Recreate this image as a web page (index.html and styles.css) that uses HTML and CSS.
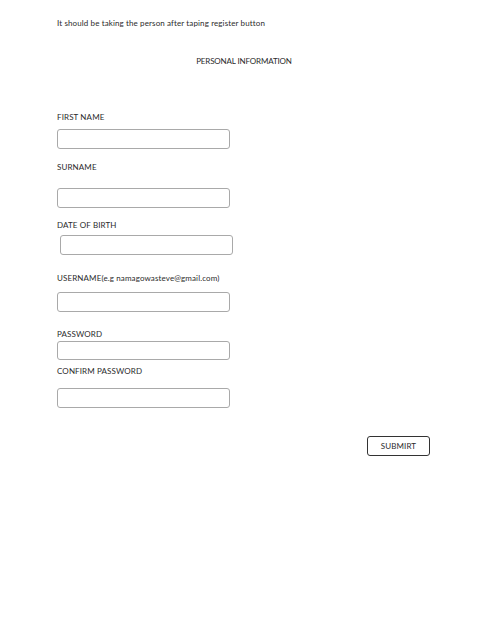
FILE: index.html
```html
<!DOCTYPE html>
<html lang="en">
<head>
    <meta charset="UTF-8">
    <meta name="viewport" content="width=device-width, initial-scale=1.0">
    <title>Personal Information</title>
    <link rel="stylesheet" href="styles.css">
</head>
<body>
    <p class="note">It should be taking the person after taping register button</p>

    <main class="sheet">
        <h1 class="sheet-title">PERSONAL INFORMATION</h1>

        <form class="reg-form" onsubmit="return false">
            <div class="field field-first">
                <label for="firstName">FIRST NAME</label>
                <input class="box" id="firstName" type="text">
            </div>
            <div class="field field-surname">
                <label for="surname">SURNAME</label>
                <input class="box" id="surname" type="text">
            </div>
            <div class="field field-dob">
                <label for="dob">DATE OF BIRTH</label>
                <input class="box" id="dob" type="text">
            </div>
            <div class="field field-username">
                <label for="username">USERNAME(e.g namagowasteve@gmail.com)</label>
                <input class="box" id="username" type="text">
            </div>
            <div class="field field-password">
                <label for="password">PASSWORD</label>
                <input class="box" id="password" type="password">
            </div>
            <div class="field field-confirm">
                <label for="confirm">CONFIRM PASSWORD</label>
                <input class="box" id="confirm" type="password">
            </div>

            <div class="actions">
                <button class="btn" type="submit">SUBMIRT</button>
            </div>
        </form>
    </main>
</body>
</html>
```

FILE: styles.css
```css
* {
    margin: 0;
    padding: 0;
    box-sizing: border-box;
}

body {
    font-family: 'Lato', 'Open Sans', sans-serif;
    font-size: 8px;
    line-height: 10px;
    letter-spacing: 0.12px;
    color: #2b2b2b;
    background: #fff;
    padding: 18px 0 0 57px;
}

.sheet {
    width: 374px;
}

.sheet-title {
    margin-top: 28px;
    font-size: 8px;
    font-weight: 400;
    text-align: center;
    letter-spacing: -0.15px;
}

.reg-form {
    margin-top: 46px;
}

.field {
    display: flex;
    flex-direction: column;
    align-items: flex-start;
}

.field label {
    height: 10px;
}

.box {
    width: 173px;
    height: 20px;
    border: 1px solid #a9a9a9;
    border-radius: 3px;
    background: #fff;
    outline: none;
}

.field-first .box { margin-top: 7px; }

.field-surname { margin-top: 13px; }
.field-surname .box { margin-top: 16px; }

.field-dob { margin-top: 12px; }
.field-dob .box { margin-top: 5px; margin-left: 3px; }

.field-username { margin-top: 18px; }
.field-username .box { margin-top: 9px; }

.field-password { margin-top: 17px; }
.field-password .box { margin-top: 2px; height: 19px; }

.field-confirm { margin-top: 6px; }
.field-confirm .box { margin-top: 12px; }

.actions {
    display: flex;
    justify-content: flex-end;
    margin-top: 28px;
    padding-right: 1px;
}

.btn {
    width: 63px;
    height: 20px;
    border: 1px solid #333;
    border-radius: 3px;
    background: #fff;
    color: #2b2b2b;
    font-family: inherit;
    font-size: 8px;
    letter-spacing: 0.12px;
    cursor: pointer;
}
```
